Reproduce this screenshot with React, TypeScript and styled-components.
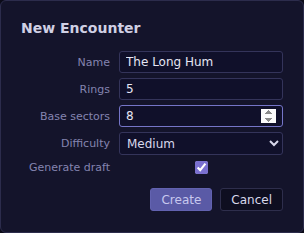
import React, { useState } from 'react';
import styled, { createGlobalStyle } from 'styled-components';

const GlobalStyle = createGlobalStyle`
  html, body {
    margin: 0;
    padding: 0;
    background: #0b0b18;
  }
  body {
    font-family: "DejaVu Sans", Verdana, sans-serif;
  }
`;

const Dialog = styled.form`
  box-sizing: border-box;
  width: 304px;
  height: 233px;
  background: #14142b;
  border: 1px solid #2c2c4c;
  border-radius: 6px;
  padding: 18px 20px 0 20px;
  color: #d8d8ec;
`;

const Title = styled.h2`
  margin: 0 0 14px 0;
  font-size: 14px;
  font-weight: bold;
  color: #d0d0e4;
  line-height: 18px;
`;

const Fields = styled.div`
  display: grid;
  grid-template-columns: 89px 1fr;
  column-gap: 9px;
  row-gap: 5px;
  align-items: center;
`;

const Label = styled.label`
  text-align: right;
  font-size: 11px;
  color: #8484b0;
`;

const TextInput = styled.input<{ $focused?: boolean }>`
  box-sizing: border-box;
  width: 164px;
  height: 22px;
  margin: 0;
  padding: 0 6px;
  background: #10102a;
  border: 1px solid ${(p) => (p.$focused ? '#7575c8' : '#34345a')};
  border-radius: 3px;
  color: #e6e6f4;
  font-family: inherit;
  font-size: 12px;
  outline: none;
`;

const Select = styled.select`
  box-sizing: border-box;
  width: 164px;
  height: 23px;
  margin: 0;
  padding: 0 3px;
  background: #10102a;
  border: 1px solid #34345a;
  border-radius: 3px;
  color: #d8d8ec;
  font-family: inherit;
  font-size: 12px;
  outline: none;
`;

const CheckCell = styled.div`
  display: flex;
  justify-content: center;
  height: 14px;
  align-items: center;
`;

const Check = styled.input`
  margin: 0;
  width: 13px;
  height: 13px;
  accent-color: #7a70d0;
`;

const Actions = styled.div`
  display: flex;
  justify-content: flex-end;
  gap: 8px;
  margin-top: 14px;
`;

const Button = styled.button<{ $primary?: boolean }>`
  box-sizing: border-box;
  height: 23px;
  padding: 0 10px;
  border-radius: 3px;
  font-family: inherit;
  font-size: 12px;
  border: 1px solid ${(p) => (p.$primary ? '#6262b0' : '#2e2e4c')};
  background: ${(p) => (p.$primary ? '#5a5aa6' : '#0e0e20')};
  color: ${(p) => (p.$primary ? '#c8c8ee' : '#d8d8ec')};
`;

export default function App() {
  const [name, setName] = useState('The Long Hum');
  const [rings, setRings] = useState('5');
  const [sectors, setSectors] = useState('8');
  const [difficulty, setDifficulty] = useState('medium');
  const [draft, setDraft] = useState(true);

  return (
    <>
      <GlobalStyle />
      <Dialog onSubmit={(e) => e.preventDefault()}>
        <Title>New Encounter</Title>
        <Fields>
          <Label>Name</Label>
          <TextInput value={name} onChange={(e) => setName(e.target.value)} />
          <Label>Rings</Label>
          <TextInput value={rings} onChange={(e) => setRings(e.target.value)} />
          <Label>Base sectors</Label>
          <TextInput
            type="number"
            autoFocus
            $focused
            value={sectors}
            onChange={(e) => setSectors(e.target.value)}
          />
          <Label>Difficulty</Label>
          <Select value={difficulty} onChange={(e) => setDifficulty(e.target.value)}>
            <option value="easy">Easy</option>
            <option value="medium">Medium</option>
            <option value="hard">Hard</option>
          </Select>
          <Label>Generate draft</Label>
          <CheckCell>
            <Check type="checkbox" checked={draft} onChange={(e) => setDraft(e.target.checked)} />
          </CheckCell>
        </Fields>
        <Actions>
          <Button type="submit" $primary>Create</Button>
          <Button type="button">Cancel</Button>
        </Actions>
      </Dialog>
    </>
  );
}
